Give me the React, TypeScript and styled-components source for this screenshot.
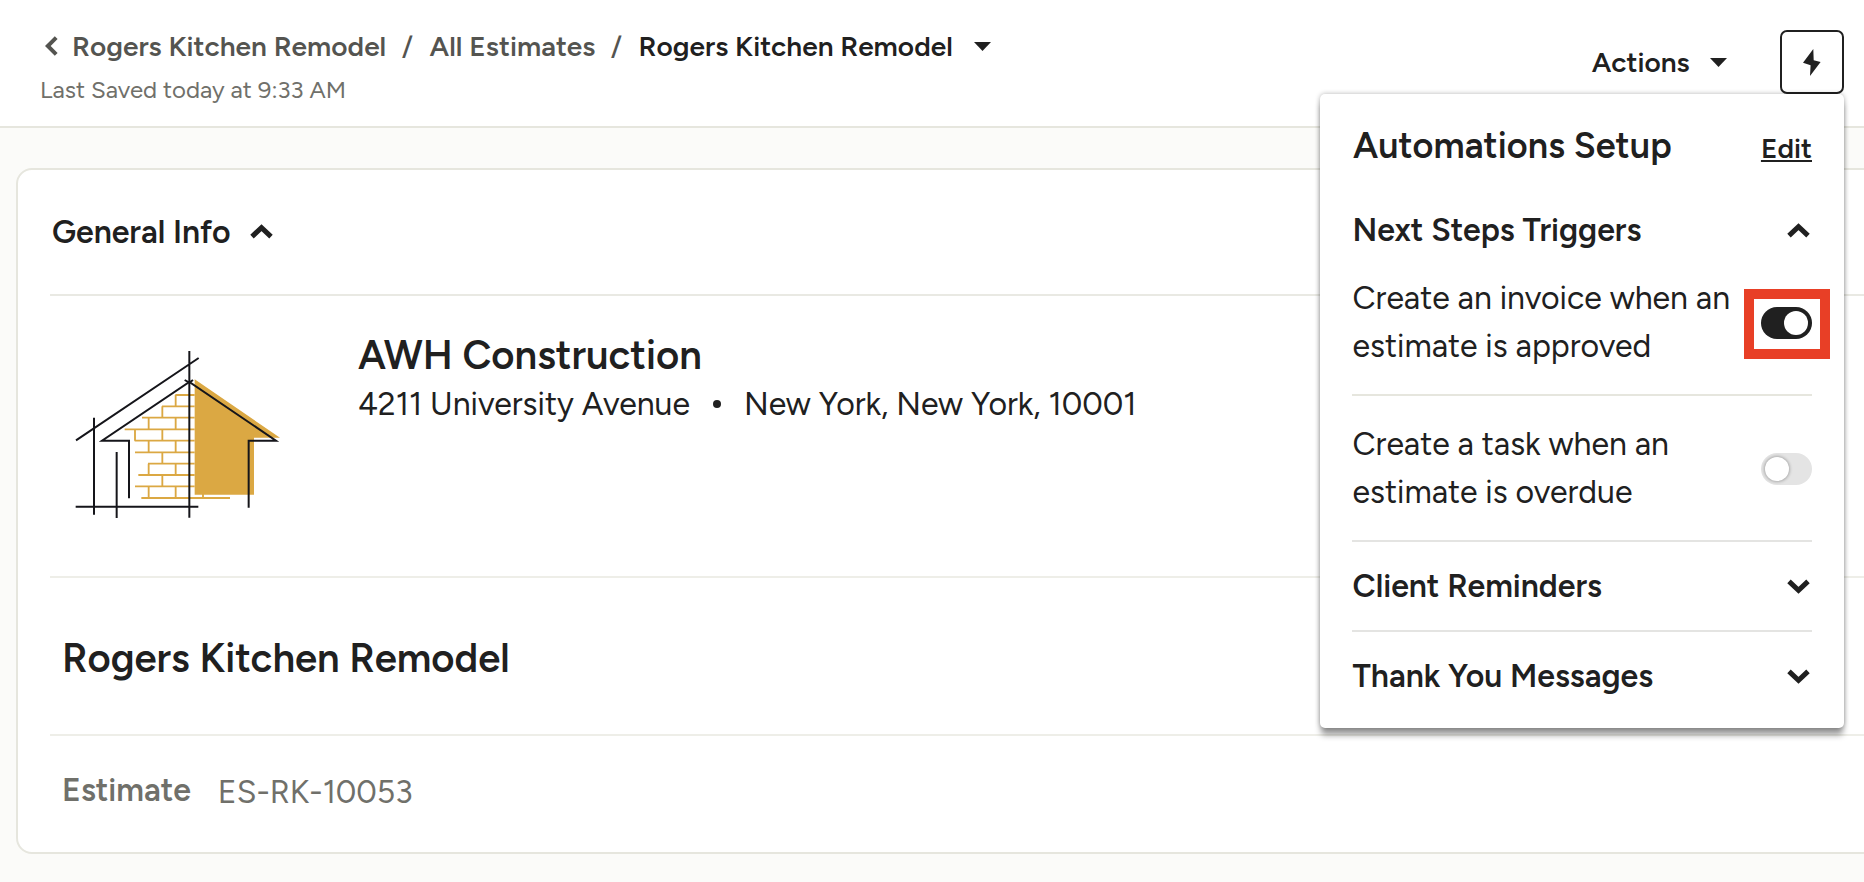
import React, { useState } from "react";
import styled, { createGlobalStyle } from "styled-components";

const ink = "#202020";
const line = "#e6e6de";
const faintLine = "#eeeee8";
const muted = "#545450";

const GlobalStyle = createGlobalStyle`
  * { box-sizing: border-box; }
  body {
    margin: 0;
    background: #fbfbf9;
    color: ${ink};
    font-family: Figtree, Inter, sans-serif;
    overflow: hidden;
  }
  button { font: inherit; color: inherit; background: none; border: 0; padding: 0; margin: 0; text-align: left; }
  h1, h2, h3, p { margin: 0; }
`;

const Page = styled.div`
  width: 1864px;
  height: 882px;
  overflow: hidden;
`;

const TopBar = styled.header`
  position: relative;
  display: flex;
  justify-content: space-between;
  height: 128px;
  padding: 0 20px 0 40px;
  background: #fff;
  border-bottom: 2px solid ${line};
`;

const Trail = styled.div`
  display: flex;
  flex-direction: column;
  gap: 12px;
  padding-top: 29px;
`;

const Crumbs = styled.nav`
  display: flex;
  align-items: center;
  height: 34px;
  padding-left: 5px;
  font-size: 28px;
  line-height: 34px;
  letter-spacing: 0.04px;
  white-space: nowrap;
`;

const Crumb = styled.span<{ $current?: boolean }>`
  font-weight: 600;
  color: ${(p) => (p.$current ? ink : muted)};
`;

const Slash = styled.span`
  margin: 0 16.5px 0 15.5px;
  font-weight: 500;
  color: ${muted};
`;

const BackIcon = styled.svg`
  width: 13px;
  height: 20px;
  margin-right: 14px;
`;

const Caret = styled.svg<{ $gap: number }>`
  width: 17px;
  height: 9px;
  margin-left: ${(p) => p.$gap}px;
`;

const Saved = styled.p`
  font-size: 24px;
  line-height: 30px;
  color: #70706a;
`;

const Tools = styled.div`
  display: flex;
  align-items: flex-start;
  padding-top: 30px;
`;

const ActionsButton = styled.button`
  display: flex;
  align-items: center;
  height: 64px;
  margin-right: 53px;
  font-size: 28px;
  font-weight: 600;
  line-height: 34px;
`;

const BoltButton = styled.button`
  display: flex;
  align-items: center;
  justify-content: center;
  width: 64px;
  height: 64px;
  border: 2px solid ${ink};
  border-radius: 7px;
`;

const Panel = styled.section`
  position: absolute;
  z-index: 2;
  top: 94px;
  right: 20px;
  width: 524px;
  height: 634px;
  padding: 0 32px;
  background: #fff;
  border-radius: 5px;
  box-shadow: 0 8px 6px -1px rgba(0, 0, 0, 0.38), 0 0 5px rgba(0, 0, 0, 0.3);
`;

const PanelHead = styled.div`
  display: flex;
  align-items: baseline;
  justify-content: space-between;
  height: 92px;
  padding: 30px 0 0 1px;
`;

const PanelTitle = styled.h2`
  font-size: 36px;
  font-weight: 600;
  line-height: 44px;
  letter-spacing: 0.05px;
`;

const EditLink = styled.a`
  font-size: 28px;
  font-weight: 600;
  line-height: 34px;
  text-decoration: underline;
  text-decoration-thickness: 2px;
  text-underline-offset: 2px;
`;

const Group = styled.button<{ $height: number; $ruled?: boolean }>`
  display: flex;
  align-items: center;
  justify-content: space-between;
  width: 100%;
  height: ${(p) => p.$height}px;
  padding: 0 2px 0 0.5px;
  border-bottom: ${(p) => (p.$ruled ? "2px solid #e4e4e2" : "0")};
  font-size: 32px;
  font-weight: 600;
  line-height: 40px;
`;

const Trigger = styled.div<{ $first?: boolean }>`
  display: flex;
  align-items: center;
  justify-content: space-between;
  height: ${(p) => (p.$first ? 122 : 146)}px;
  padding: ${(p) => (p.$first ? "0 0 24px 0.5px" : "24px 0 24px 0.5px")};
  border-bottom: 2px solid ${(p) => (p.$first ? line : "#e4e4e2")};
`;

const TriggerText = styled.p`
  font-size: 32px;
  line-height: 48px;
  white-space: pre;
`;

const Highlight = styled.div`
  display: flex;
  align-items: center;
  justify-content: center;
  width: 86px;
  height: 70px;
  margin: 4px -18px 0 0;
  padding: 0 1px 2px 0;
  border: 10px solid #e83f26;
`;

const Switch = styled.button<{ $on: boolean }>`
  display: flex;
  flex: none;
  align-items: center;
  justify-content: ${(p) => (p.$on ? "flex-end" : "flex-start")};
  width: 51px;
  height: 32px;
  margin-top: ${(p) => (p.$on ? 0 : 2)}px;
  padding: 0 4px;
  border-radius: 16px;
  background: ${(p) => (p.$on ? ink : "#e4e4e4")};
`;

const Knob = styled.span<{ $on: boolean }>`
  width: 24px;
  height: 24px;
  border-radius: 50%;
  background: #fff;
  box-shadow: ${(p) => (p.$on ? "none" : "0 0 3px 1px rgba(0, 0, 0, 0.25)")};
`;

const Card = styled.main`
  width: 1900px;
  height: 686px;
  margin: 40px 0 0 16px;
  padding-left: 32px;
  background: #fff;
  border: 2px solid ${line};
  border-radius: 16px;
`;

const InfoHead = styled.button`
  display: flex;
  align-items: center;
  gap: 19.5px;
  width: 100%;
  height: 126px;
  padding: 0 0 1px 2px;
  border-bottom: 2px solid #e9e9e3;
  font-size: 32px;
  font-weight: 600;
`;

const Company = styled.div`
  display: flex;
  height: 282px;
  border-bottom: 2px solid ${faintLine};
`;

const Logo = styled.svg`
  width: 280px;
  height: 220px;
  margin: 24px 0 0 -10px;
`;

const CompanyText = styled.div`
  padding: 34px 0 0 38px;
`;

const CompanyName = styled.h1`
  font-size: 40px;
  font-weight: 600;
  line-height: 50px;
`;

const Address = styled.p`
  display: flex;
  align-items: center;
  font-size: 32px;
  line-height: 48px;
`;

const Dot = styled.span`
  width: 8px;
  height: 8px;
  margin: 0 23px;
  border-radius: 50%;
  background: ${ink};
`;

const Project = styled.h1`
  height: 158px;
  padding-left: 12px;
  border-bottom: 2px solid ${faintLine};
  font-size: 40px;
  font-weight: 600;
  line-height: 160px;
`;

const EstimateRow = styled.div`
  display: flex;
  gap: 27px;
  padding: 34px 0 0 12px;
  font-size: 32px;
  line-height: 40px;
  color: #70706a;
`;

const EstimateLabel = styled.span`
  font-weight: 600;
`;

const EstimateNumber = styled.span`
  padding-top: 2px;
`;

const ChevronIcon = styled.svg`
  flex: none;
  width: 23px;
  height: 15px;
`;

const Chevron = ({ up }: { up?: boolean }) => (
  <ChevronIcon viewBox="0 0 23 15">
    <path d={up ? "M2 12.6 11.5 3.6 21 12.6" : "M2 2.4 11.5 11.4 21 2.4"} fill="none" stroke={ink} strokeWidth="5" />
  </ChevronIcon>
);

const DownCaret = ({ gap }: { gap: number }) => (
  <Caret $gap={gap} viewBox="0 0 17 9">
    <path d="M0 0H17L8.5 9Z" fill={ink} />
  </Caret>
);

const HouseLogo = () => (
  <Logo viewBox="0 0 840 660" fill="none">
    <path d="M464 178 720 353H642V524H464Z" fill="#dba843" />
    <g stroke="#dba843" strokeWidth="5.5">
      <path d="M406 225H464M366 259H464M306 293H464M254 328H464M284 362H464M285 397H464M324 431H464M295 465H464M285 499H464M304 534H570" />
      <path d="M407 225V259M367 259V293M326 293V328M407 293V328M285 328V362M367 328V362M326 362V397M407 362V397M367 397V431M326 431V465M407 431V465M367 465V499M326 499V534M407 499V534M489 520V534" />
    </g>
    <g stroke="#15151a" strokeWidth="6">
      <path d="M108 361 476 114M448 93V593M162 293V584M230 396V594M107 560H475" />
      <path d="M267 535V362H186L448 186 708 362H626V563" />
      <path d="M434 180 448 188 459 180" />
    </g>
  </Logo>
);

export default function App() {
  const [invoiceOn, setInvoiceOn] = useState(true);
  const [taskOn, setTaskOn] = useState(false);

  return (
    <Page>
      <GlobalStyle />
      <TopBar>
        <Trail>
          <Crumbs>
            <BackIcon viewBox="0 0 13 20">
              <path d="M11.2 1.6 2.8 10 11.2 18.4" fill="none" stroke={muted} strokeWidth="4" />
            </BackIcon>
            <Crumb>Rogers Kitchen Remodel</Crumb>
            <Slash>/</Slash>
            <Crumb>All Estimates</Crumb>
            <Slash>/</Slash>
            <Crumb $current>Rogers Kitchen Remodel</Crumb>
            <DownCaret gap={21} />
          </Crumbs>
          <Saved>Last Saved today at 9:33 AM</Saved>
        </Trail>
        <Tools>
          <ActionsButton>
            Actions
            <DownCaret gap={20.5} />
          </ActionsButton>
          <BoltButton aria-label="Automations">
            <svg width="18" height="27" viewBox="0 0 18 27">
              <path d="M10.3 0 0 13.8 7.6 16.2 7 27 17.6 13 10.7 11.2Z" fill={ink} />
            </svg>
          </BoltButton>
        </Tools>
        <Panel>
          <PanelHead>
            <PanelTitle>Automations Setup</PanelTitle>
            <EditLink>Edit</EditLink>
          </PanelHead>
          <Group $height={88}>
            Next Steps Triggers
            <Chevron up />
          </Group>
          <Trigger $first>
            <TriggerText>{"Create an invoice when an\nestimate is approved"}</TriggerText>
            <Highlight>
              <Switch $on={invoiceOn} onClick={() => setInvoiceOn(!invoiceOn)}>
                <Knob $on={invoiceOn} />
              </Switch>
            </Highlight>
          </Trigger>
          <Trigger>
            <TriggerText>{"Create a task when an\nestimate is overdue"}</TriggerText>
            <Switch $on={taskOn} onClick={() => setTaskOn(!taskOn)}>
              <Knob $on={taskOn} />
            </Switch>
          </Trigger>
          <Group $height={90} $ruled>
            Client Reminders
            <Chevron />
          </Group>
          <Group $height={88}>
            Thank You Messages
            <Chevron />
          </Group>
        </Panel>
      </TopBar>
      <Card>
        <InfoHead>
          General Info
          <Chevron up />
        </InfoHead>
        <Company>
          <HouseLogo />
          <CompanyText>
            <CompanyName>AWH Construction</CompanyName>
            <Address>
              <span>4211 University Avenue</span>
              <Dot />
              <span>New York, New York, 10001</span>
            </Address>
          </CompanyText>
        </Company>
        <Project>Rogers Kitchen Remodel</Project>
        <EstimateRow>
          <EstimateLabel>Estimate</EstimateLabel>
          <EstimateNumber>ES-RK-10053</EstimateNumber>
        </EstimateRow>
      </Card>
    </Page>
  );
}
